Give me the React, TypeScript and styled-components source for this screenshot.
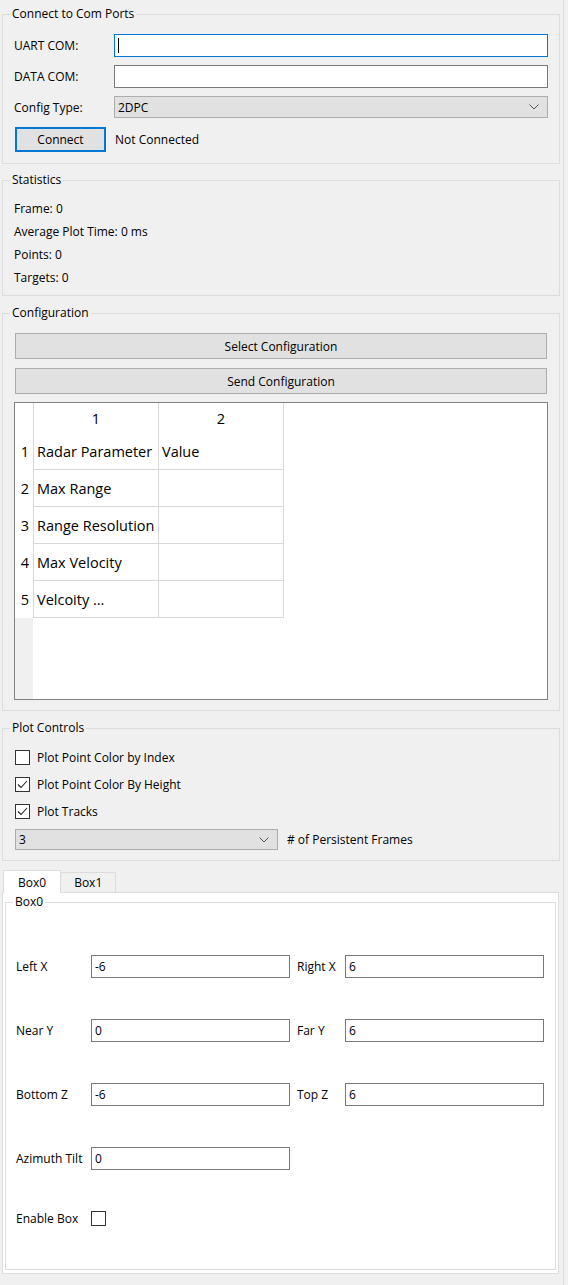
import styled, { createGlobalStyle } from "styled-components";

const Global = createGlobalStyle`
  html, body {
    margin: 0;
    padding: 0;
    background: #f0f0f0;
  }
  body {
    font-family: "Open Sans", "Noto Sans", sans-serif;
    font-size: 12px;
    color: #000;
  }
`;

const Page = styled.div`
  box-sizing: border-box;
  width: 564px;
  min-height: 1285px;
  padding: 6px 3px 0 2px;
  border-right: 1px solid #dcdcdc;
  display: flex;
  flex-direction: column;
`;

const Group = styled.fieldset<{ $top?: number; $pad: string }>`
  margin: ${(p) => p.$top ?? 0}px 0 0 0;
  padding: ${(p) => p.$pad};
  border: 1px solid #dcdcdc;
  min-width: 0;
  background: inherit;
`;

// legend sits inside the fieldset padding, so pull it back by that amount
const Legend = styled.legend<{ $inset?: number }>`
  margin-left: ${(p) => 7 - (p.$inset ?? 0)}px;
  padding: 0 2px;
  line-height: 16px;
  height: 16px;
`;

const FormGrid = styled.div`
  display: grid;
  grid-template-columns: 100px 1fr;
  align-items: center;
  row-gap: 8px;
`;

const Label = styled.span`
  white-space: nowrap;
`;

const Field = styled.div<{ $focus?: boolean }>`
  box-sizing: border-box;
  height: 23px;
  background: #fff;
  border: 1px solid ${(p) => (p.$focus ? "#0078d7" : "#7a7a7a")};
  padding-left: 3px;
  display: flex;
  align-items: center;
`;

const Caret = styled.span`
  width: 1px;
  height: 15px;
  background: #000;
`;

const Combo = styled.div<{ $w?: number }>`
  box-sizing: border-box;
  height: ${(p) => (p.$w ? 21 : 22)}px;
  width: ${(p) => (p.$w ? `${p.$w}px` : "auto")};
  background: #e1e1e1;
  border: 1px solid #adadad;
  padding: 0 8px 0 3px;
  display: flex;
  align-items: center;
  justify-content: space-between;
`;

const ConnectRow = styled.div`
  grid-column: 1 / 3;
  display: flex;
  align-items: center;
  gap: 9px;
  margin-top: 1px;
  padding-left: 1px;
`;

const Button = styled.button<{ $primary?: boolean }>`
  box-sizing: border-box;
  font: inherit;
  color: #000;
  background: #e1e1e1;
  border: ${(p) => (p.$primary ? "2px solid #0078d7" : "1px solid #adadad")};
  height: ${(p) => (p.$primary ? 25 : 26)}px;
  width: ${(p) => (p.$primary ? "91px" : "100%")};
  padding: 0;
  margin: 0;
`;

const StatLine = styled.div`
  line-height: 23px;
`;

const Stack = styled.div`
  display: flex;
  flex-direction: column;
  gap: 9px;
  padding: 0 1px;
`;

const Table = styled.div`
  box-sizing: border-box;
  height: 298px;
  margin-top: -1px;
  margin-left: -1px;
  margin-right: -1px;
  border: 1px solid #828282;
  background: #fff;
  display: grid;
  grid-template-columns: 18px 126px 125px 1fr;
  grid-template-rows: 30px repeat(5, 37px) 1fr;
  font-size: 14.5px;
`;

const HeadCell = styled.div<{ $first?: boolean }>`
  border-right: 1px solid #d8d8d8;
  border-left: ${(p) => (p.$first ? "1px solid #d8d8d8" : "none")};
  display: flex;
  align-items: center;
  justify-content: center;
`;

const RowNum = styled.div`
  display: flex;
  align-items: center;
  justify-content: center;
  padding-left: 2px;
`;

const Cell = styled.div<{ $first?: boolean }>`
  border-right: 1px solid #d8d8d8;
  border-bottom: 1px solid #d8d8d8;
  border-left: ${(p) => (p.$first ? "1px solid #d8d8d8" : "none")};
  display: flex;
  align-items: center;
  padding-left: 3px;
  white-space: nowrap;
`;

const Blank = styled.div``;

const GutterFill = styled.div`
  background: #f0f0f0;
`;

const CheckRow = styled.label`
  display: flex;
  align-items: center;
  gap: 7px;
  height: 18px;
`;

const Box = styled.span`
  box-sizing: border-box;
  width: 15px;
  height: 15px;
  border: 1px solid #333;
  background: #fff;
  display: inline-flex;
  align-items: center;
  justify-content: center;
`;

const ControlStack = styled.div`
  display: flex;
  flex-direction: column;
  gap: 9px;
  padding-left: 12px;
`;

const FramesRow = styled.div`
  display: flex;
  align-items: center;
  gap: 9px;
`;

const Tabs = styled.div`
  margin-top: 9px;
  width: 557px;
`;

const TabBar = styled.div`
  display: flex;
  align-items: flex-end;
  height: 22px;
  padding-left: 1px;
`;

const Tab = styled.div<{ $active?: boolean }>`
  box-sizing: border-box;
  height: ${(p) => (p.$active ? 23 : 20)}px;
  padding: 0 ${(p) => (p.$active ? 14 : 13)}px;
  background: ${(p) => (p.$active ? "#fff" : "#f0f0f0")};
  border: 1px solid #dcdcdc;
  border-bottom: none;
  border-left: ${(p) => (p.$active ? "1px solid #dcdcdc" : "none")};
  display: flex;
  align-items: center;
  position: relative;
  z-index: ${(p) => (p.$active ? 1 : 0)};
  margin-bottom: ${(p) => (p.$active ? -1 : 0)}px;
`;

const Pane = styled.div`
  border: 1px solid #dcdcdc;
  background: #fff;
  padding: 1px 2px 3px 2px;
`;

const BoxGrid = styled.div`
  display: grid;
  grid-template-columns: 75px 199px 55px 199px;
  grid-template-rows: repeat(4, 23px) 15px;
  row-gap: 41px;
  align-items: center;
`;

const BoxLabel = styled.span<{ $right?: boolean }>`
  padding-left: ${(p) => (p.$right ? 7 : 0)}px;
  white-space: nowrap;
`;

const Chevron = () => (
  <svg width="10" height="6" viewBox="0 0 10 6">
    <polyline points="0.5,0.5 5,5 9.5,0.5" fill="none" stroke="#555" strokeWidth="1" />
  </svg>
);

const Tick = () => (
  <svg width="11" height="9" viewBox="0 0 11 9">
    <polyline points="1,4.5 4,7.5 10,1" fill="none" stroke="#222" strokeWidth="1.1" />
  </svg>
);

const rows = ["Radar Parameter", "Max Range", "Range Resolution", "Max Velocity", "Velcoity ..."];

export default function App() {
  return (
    <>
      <Global />
      <Page>
        <Group $pad="12px 11px 11px 11px">
          <Legend $inset={11}>Connect to Com Ports</Legend>
          <FormGrid>
            <Label>UART COM:</Label>
            <Field $focus>
              <Caret />
            </Field>
            <Label>DATA COM:</Label>
            <Field />
            <Label>Config Type:</Label>
            <Combo>
              <span>2DPC</span>
              <Chevron />
            </Combo>
            <ConnectRow>
              <Button $primary>Connect</Button>
              <span>Not Connected</span>
            </ConnectRow>
          </FormGrid>
        </Group>

        <Group $top={8} $pad="9px 11px 6px 11px">
          <Legend $inset={11}>Statistics</Legend>
          <StatLine>Frame: 0</StatLine>
          <StatLine>Average Plot Time: 0 ms</StatLine>
          <StatLine>Points: 0</StatLine>
          <StatLine>Targets: 0</StatLine>
        </Group>

        <Group $top={9} $pad="12px 11px 10px 11px">
          <Legend $inset={11}>Configuration</Legend>
          <Stack>
            <Button>Select Configuration</Button>
            <Button>Send Configuration</Button>
            <Table>
              <Blank />
              <HeadCell $first>1</HeadCell>
              <HeadCell>2</HeadCell>
              <Blank />
              {rows.map((r, i) => (
                <>
                  <RowNum key={`n${i}`}>{i + 1}</RowNum>
                  <Cell key={`a${i}`} $first>
                    {r}
                  </Cell>
                  <Cell key={`b${i}`}>{i === 0 ? "Value" : ""}</Cell>
                  <Blank key={`c${i}`} />
                </>
              ))}
              <GutterFill />
            </Table>
          </Stack>
        </Group>

        <Group $top={9} $pad="12px 11px 10px 0">
          <Legend>Plot Controls</Legend>
          <ControlStack>
            <CheckRow>
              <Box />
              Plot Point Color by Index
            </CheckRow>
            <CheckRow>
              <Box>
                <Tick />
              </Box>
              Plot Point Color By Height
            </CheckRow>
            <CheckRow>
              <Box>
                <Tick />
              </Box>
              Plot Tracks
            </CheckRow>
            <FramesRow>
              <Combo $w={263}>
                <span>3</span>
                <Chevron />
              </Combo>
              <span># of Persistent Frames</span>
            </FramesRow>
          </ControlStack>
        </Group>

        <Tabs>
          <TabBar>
            <Tab $active>Box0</Tab>
            <Tab>Box1</Tab>
          </TabBar>
          <Pane>
            <Group $pad="45px 10px 43px 10px">
              <Legend $inset={10}>Box0</Legend>
              <BoxGrid>
                <BoxLabel>Left X</BoxLabel>
                <Field>-6</Field>
                <BoxLabel $right>Right X</BoxLabel>
                <Field>6</Field>
                <BoxLabel>Near Y</BoxLabel>
                <Field>0</Field>
                <BoxLabel $right>Far Y</BoxLabel>
                <Field>6</Field>
                <BoxLabel>Bottom Z</BoxLabel>
                <Field>-6</Field>
                <BoxLabel $right>Top Z</BoxLabel>
                <Field>6</Field>
                <BoxLabel>Azimuth Tilt</BoxLabel>
                <Field>0</Field>
                <span />
                <span />
                <BoxLabel>Enable Box</BoxLabel>
                <Box />
              </BoxGrid>
            </Group>
          </Pane>
        </Tabs>
      </Page>
    </>
  );
}
